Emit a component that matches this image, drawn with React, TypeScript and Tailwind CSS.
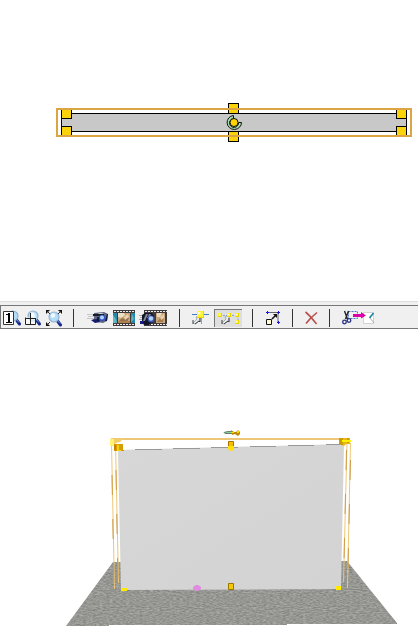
import React, { useState } from 'react';

function Lens({ x, y }: { x: number; y: number }) {
  return (
    <g transform={`translate(${x} ${y})`}>
      <path d="M2.500 3L5.500 7" stroke="#142a86" strokeWidth="3" strokeLinecap="round" />
      <path d="M3 3L5 5.500" stroke="#6d8cda" strokeWidth="1" />
      <circle cx="-1" cy="-1" r="5" fill="#b5def6" stroke="#93b3d4" strokeWidth="1.2" />
      <circle cx="-2" cy="-2.500" r="2.2" fill="#f0faff" />
    </g>
  );
}

function ZoomOneIcon() {
  return (
    <svg width="18" height="18" viewBox="0 0 18 18" aria-hidden="true">
      <Lens x={11} y={8} />
      <path d="M.5 2.500h10v13H.5z" fill="#fff" stroke="#333" />
      <path d="M6 4v9" stroke="#000" strokeWidth="2" />
      <path d="M3 5.500h3M3 13.500h6" stroke="#000" strokeWidth="1" />
    </svg>
  );
}

function ZoomWindowIcon() {
  return (
    <svg width="18" height="18" viewBox="0 0 18 18" aria-hidden="true">
      <Lens x={10} y={8} />
      <path d="M1.500 8.500h5v-4h5v11h-10z" fill="#fff" fillOpacity=".6" />
      <path d="M1.500 8.500v7h10v-6M1 9.500h11M6.500 4v11" fill="none" stroke="#222" />
    </svg>
  );
}

function ZoomFitIcon() {
  return (
    <svg width="18" height="18" viewBox="0 0 18 18" aria-hidden="true">
      <Lens x={10} y={9} />
      <path d="M1 5V1h4zM13 1h4v4zM1 13v4h4z" fill="#111" />
      <path d="M2 2l3 3M16 2l-3 3M2 16l3-3" stroke="#333" />
    </svg>
  );
}

function CameraIcon() {
  return (
    <svg width="22" height="18" viewBox="0 0 22 18" aria-hidden="true">
      <path d="M0 5h10v1H0zM1 7h8v1H1zM0 9h6v1H0z" fill="#c5c6cc" />
      <path d="M7 4l10-1 4 2-1 7-4 2-6-1-5-1 2-3z" fill="#60697e" />
      <path d="M4 11l6-1 3 3-5 1z" fill="#161a70" />
      <path d="M6 5h11v2H6zM10 8h3v4h-3z" fill="#171a27" />
      <path d="M12 4h5l-2 1h-4z" fill="#c6cbd4" />
      <path d="M20 5h1l-1 7h-2z" fill="#151841" />
      <circle cx="15" cy="9" r="3.200" fill="#3552c4" />
      <circle cx="15" cy="8.500" r="2" fill="#a9d7ff" />
    </svg>
  );
}

function Film({ x = 0, width }: { x?: number; width: number }) {
  return (
    <g transform={`translate(${x} 0)`}>
      <path d={`M0 1h${width}v16H0z`} fill="#403b3a" />
      <path d={`M1 2.500h${width - 1}M1 15.500h${width - 1}`} stroke="#eee" strokeDasharray="2 1" />
    </g>
  );
}

function FilmIcon() {
  return (
    <svg width="22" height="18" viewBox="0 0 22 18" aria-hidden="true">
      <Film width={22} />
      <path d="M0 4h4v10H0zM18 4h4v10h-4z" fill="#2787aa" />
      <path d="M0 6l3 4 1 4H0zM19 5l2 5-3 3z" fill="#62b6c8" />
      <path d="M5 4h12v10H5z" fill="#c6a67a" />
      <path d="M5 4h6l1 2-4 3-3-1z" fill="#eee0c7" />
      <path d="M6 12l3-3 2 1 3-3 2 2-2 4H6z" fill="#94704e" />
      <path d="M11 8l4-3 1 3-4 3z" fill="#ebd4aa" />
      <path d="M5 12h12v2H5z" fill="#ae814d" />
    </svg>
  );
}

function CameraFilmIcon() {
  return (
    <svg width="28" height="18" viewBox="0 0 28 18" aria-hidden="true">
      <Film x={5} width={23} />
      <path d="M17 4h9v10h-9z" fill="#c8a77c" />
      <path d="M18 4h5l-2 4h-3z" fill="#eadac3" />
      <path d="M18 13l4-5 3-1-1 6z" fill="#a87a50" />
      <path d="M21 8l4-3v4l-3 2z" fill="#e9d0aa" />
      <path d="M0 6h5v1H0zM1 8h4v1H1zM0 10h3v1H0z" fill="#a5a6ae" />
      <path d="M3 6l3-2h7l2 3-1 6-4 3H5l-2-3z" fill="#121528" />
      <path d="M7 5h2l-3 7H4zM10 5h2l-2 4H8z" fill="#858b9b" />
      <path d="M1 12h4l-1 3H1z" fill="#181d85" />
      <circle cx="12" cy="10" r="3.400" fill="#3954b7" />
      <circle cx="12" cy="9.500" r="2.200" fill="#b2d3f5" />
    </svg>
  );
}

function Pointer() {
  return (
    <>
      <path d="M8 5L4 7l1 2-4 4 2 1 4-3 1 1z" fill="#e9eceb" stroke="#8b9194" strokeWidth=".7" />
      <path d="M1 10v4M3 14l4-3 1 1V8" fill="none" stroke="#3c4249" />
    </>
  );
}

function Grip({ x, y, size = 4 }: { x: number; y: number; size?: number }) {
  return (
    <g>
      <rect x={x} y={y} width={size} height={size} fill="#e9d500" />
      <rect x={x} y={y} width={size - 1} height={size - 1} fill="#fff335" />
      <rect x={x + 1} y={y + 1} width={size / 3} height={size / 3} fill="#fffbd5" />
    </g>
  );
}

function SnapPointIcon() {
  return (
    <svg width="18" height="18" viewBox="0 0 18 18" aria-hidden="true">
      <path d="M0 5.500h17" stroke="#3e80c8" />
      <path d="M9.500 8v7" stroke="#a49f97" />
      <g transform="translate(0 1)"><Pointer /></g>
      <Grip x={5} y={2} size={7} />
    </svg>
  );
}

function SnapPathIcon() {
  return (
    <svg width="24" height="16" viewBox="0 0 24 16" aria-hidden="true">
      <path d="M3 4.500h18v8" fill="none" stroke="#8ba6c5" strokeDasharray="2 1" />
      <g transform="translate(4 -1)"><Pointer /></g>
      <Grip x={1} y={2} />
      <Grip x={10} y={2} />
      <Grip x={18} y={2} />
      <Grip x={18} y={9} />
    </svg>
  );
}

function ScaleIcon() {
  return (
    <svg width="15" height="18" viewBox="0 0 15 18" aria-hidden="true">
      <path d="M3 3.500h10v10" fill="none" stroke="#666" />
      <path d="M2.500 2v3M1 3.500h3M13.500 2v3M12 3.500h3M13.500 12v3M12 13.500h3" stroke="#1717df" />
      <path d="M1.500 10.500h5v5h-5z" fill="#fffbd0" stroke="#111" />
      <path d="M7 10l4-4" stroke="#111" strokeWidth="1.600" />
      <path d="M8 5h4v4z" fill="#111" />
    </svg>
  );
}

function DeleteIcon() {
  return (
    <svg width="14" height="18" viewBox="0 0 14 18" aria-hidden="true">
      <path d="M.5 3c4 3 7 7 11 12M12 3.500c-5 4-8 7-11 11" fill="none" stroke="#b84f4f" strokeWidth="1.600" />
    </svg>
  );
}

function CutToPageIcon() {
  return (
    <svg width="34" height="18" viewBox="0 0 34 18" aria-hidden="true">
      <path d="M6.500 2.500h9v7h-9z" fill="none" stroke="#4f78d3" strokeDasharray="2 1" />
      <path d="M21.500 3.500h10v11h-10z" fill="#fff" stroke="#d2d2d2" />
      <path d="M31.500 4l-4 5" stroke="#17839f" strokeWidth="1.600" />
      <path d="M28 9l4 5" stroke="#aaa" />
      <path d="M2.500 2l3 8M6.500 2L3.500 10" stroke="#222" strokeWidth="1.400" />
      <circle cx="2.500" cy="13" r="1.800" fill="none" stroke="#26317f" strokeWidth="1.300" />
      <circle cx="7" cy="11.500" r="1.800" fill="none" stroke="#26317f" strokeWidth="1.300" />
      <path d="M11 5h8V3l5 3.500-5 3V8h-8z" fill="#dc00a7" />
    </svg>
  );
}

function ToolButton({ label, children }: { label: string; children: React.ReactNode }) {
  return (
    <button type="button" aria-label={label} className="flex h-[18px] shrink-0 items-center justify-center">
      {children}
    </button>
  );
}

function Separator() {
  return <span role="separator" className="h-[18px] w-px shrink-0 bg-[#333333]" />;
}

function Toolbar() {
  const [pathSnap, setPathSnap] = useState(true);
  return (
    <div className="border-t border-[#dddddd] bg-[#f0f0f0] pt-[3px]">
      <div
        role="toolbar"
        aria-label="View tools"
        className="flex h-6 items-center overflow-hidden border-y border-l border-[#777777] pl-0.5 pt-0.5"
      >
        <div className="flex shrink-0 items-center gap-[3px]">
          <ToolButton label="Zoom 1:1"><ZoomOneIcon /></ToolButton>
          <ToolButton label="Zoom window"><ZoomWindowIcon /></ToolButton>
          <ToolButton label="Zoom to fit"><ZoomFitIcon /></ToolButton>
        </div>
        <div className="flex shrink-0 px-2.5"><Separator /></div>
        <div className="flex shrink-0 items-center gap-1 pl-[3px] pr-3">
          <ToolButton label="Camera"><CameraIcon /></ToolButton>
          <ToolButton label="Film"><FilmIcon /></ToolButton>
          <ToolButton label="Record film"><CameraFilmIcon /></ToolButton>
        </div>
        <div className="flex shrink-0 pr-3"><Separator /></div>
        <div className="flex shrink-0 items-center gap-1 pr-2.5">
          <ToolButton label="Edit point"><SnapPointIcon /></ToolButton>
          <button
            type="button"
            aria-label="Edit path"
            aria-pressed={pathSnap}
            onClick={() => setPathSnap(!pathSnap)}
            className={
              pathSnap
                ? 'flex h-[18px] w-7 items-center justify-center border-t border-l border-[#777777] bg-[#dfdfdf]'
                : 'flex h-[18px] w-7 items-center justify-center'
            }
          >
            <SnapPathIcon />
          </button>
        </div>
        <div className="flex shrink-0 items-center gap-3">
          <Separator />
          <ToolButton label="Resize"><ScaleIcon /></ToolButton>
          <Separator />
          <ToolButton label="Delete"><DeleteIcon /></ToolButton>
        </div>
        <div className="flex shrink-0 items-center gap-3 pl-2.5">
          <Separator />
          <ToolButton label="Cut to page"><CutToPageIcon /></ToolButton>
        </div>
      </div>
    </div>
  );
}

function PlanView() {
  return (
    <svg viewBox="0 0 418 301" className="block w-full bg-white" role="img" aria-label="Wall plan view">
      <g shapeRendering="crispEdges">
        <path d="M61 119h10v-6h326v6h10v7h-10v6H71v-6H61z" fill="#c8c8c8" />
        <path d="M71 113.500h326M71 131.500h326M61.500 110v25M406.500 110v25" stroke="#000" />
        <path d="M62 110h9v8h-9zM62 127h9v8h-9zM397 110h9v8h-9zM397 127h9v8h-9z" fill="#fbd30b" />
        <path d="M71.500 110v8.500H62M71.500 135v-8.500H62M396.500 110v8.500h9.500M396.500 135v-8.500h9.500" fill="none" stroke="#000" />
        <path d="M228.500 103.500h10v10h-10zM228.500 131.500h10v10h-10z" fill="#fbd30b" stroke="#000" />
        <rect x="57" y="109" width="354" height="27" fill="none" stroke="#dba543" strokeWidth="2" />
      </g>
      <path
        d="M233.500 115.500a7.200 7 0 1 0 8 7h-3a4.500 4.500 0 1 1-5-4z"
        fill="#a5dfaf"
        stroke="#111"
      />
      <circle cx="234" cy="122.500" r="4" fill="#ffd400" stroke="#111" />
    </svg>
  );
}

function PerspectiveView() {
  return (
    <svg viewBox="0 329 418 300" className="block w-full bg-white" role="img" aria-label="Wall perspective view">
      <defs>
        <clipPath id="floor">
          <path d="M113 562L347 561L397 623V624H287V625H109V626H66z" />
        </clipPath>
        <filter id="carpet" x="0" y="0" width="100%" height="100%" colorInterpolationFilters="sRGB">
          <feTurbulence type="fractalNoise" baseFrequency="0.3 0.95" numOctaves="2" seed="6" />
          <feColorMatrix values=".28 0 0 0 .45  .28 0 0 0 .45  .28 0 0 0 .435  0 0 0 0 1" />
        </filter>
        <linearGradient id="wall" x1="0" y1="0" x2="1" y2="1">
          <stop stopColor="#d7d7d7" />
          <stop offset="1" stopColor="#d3d3d3" />
        </linearGradient>
      </defs>
      <g clipPath="url(#floor)">
        <rect x="60" y="560" width="345" height="68" filter="url(#carpet)" />
      </g>
      <path d="M118 450L344 444L341 589L121 590z" fill="url(#wall)" />
      <path
        d="M120 450.500h4M135 449.500h27M173 448.500h27M211 447.500h27M250 446.500h26M288 445.500h26M326 444.500h17"
        stroke="#999"
      />
      <g fill="none" stroke="#edc778">
        <path d="M111 439H350" strokeWidth="2" />
        <path d="M111.500 443l3 146M115.500 444l3 139M347 443l-3.500 140M350.500 443l-3 145" />
      </g>
      <g fill="none" stroke="#cf9b44" strokeDasharray="20 24">
        <path d="M112 475l2 114M116 470l2 114M346.500 450l-3 133M350.500 460l-3 128" />
      </g>
      <path d="M110 439h13l-3 3-4 1-2 3h-4z" fill="#f3cf69" />
      <path d="M110 439h4v7h-4z" fill="#fff275" />
      <path d="M339 438h11v6h-4l-2 2-5-2z" fill="#e7b90c" />
      <path d="M340 438v6M342 438v7M348 438v5" stroke="#ad7c00" />
      <path d="M342 441h9" stroke="#ffef00" strokeWidth="2" />
      <path d="M114 444h9v7h-9z" fill="#d99b00" />
      <path d="M117 445h4v6h-4z" fill="#f5ce16" />
      <path d="M115 445v5M120 445v5" stroke="#a97400" />
      <path d="M228.500 441.500h5v6h-5z" fill="#f4bd00" stroke="#a77400" />
      <path d="M228 446h6v3l-2 2h-2l-2-2z" fill="#ffe00c" />
      <path d="M224 432.500l4-1h4v2h-7z" fill="#83d396" stroke="#64826c" />
      <path d="M231 430l3 2h2l2-2 2 2v2l-2 2-3-2-3 1z" fill="#bc8700" />
      <path d="M231 432h3v1h-3zM237 431h2v2h-2z" fill="#ffdb06" />
      <path d="M121 588h6v3h-6zM336 586h5v4h-5z" fill="#ffeb00" />
      <path d="M228.500 583.500h5v6h-5z" fill="#f5c900" stroke="#9d7600" />
      <path d="M193 587l3-2h2l3 2v2l-3 2h-2l-3-2z" fill="#df8bdf" />
    </svg>
  );
}

export default function App() {
  return (
    <main className="w-full bg-white font-['Liberation_Sans',sans-serif] text-sm">
      <PlanView />
      <Toolbar />
      <PerspectiveView />
    </main>
  );
}
